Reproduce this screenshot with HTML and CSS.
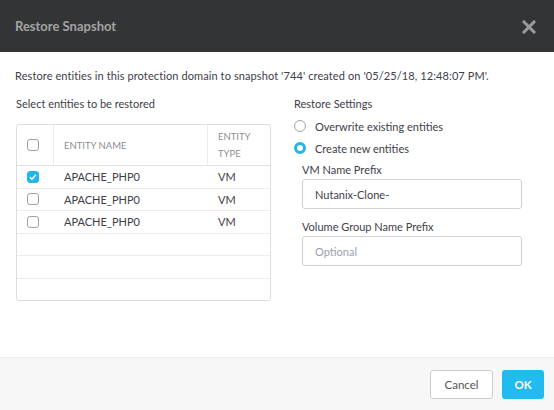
FILE: index.html
```html
<!DOCTYPE html>
<html>
<head>
<meta charset="utf-8">
<link rel="stylesheet" href="styles.css">
</head>
<body>
<div class="dialog">
  <div class="header">
    <div class="title">Restore Snapshot</div>
    <svg class="close" width="14" height="14" viewBox="0 0 14 14"><path d="M2 2 L12 12 M12 2 L2 12" stroke="#9b9b9b" stroke-width="3" stroke-linecap="square"/></svg>
  </div>
  <div class="body">
    <p class="intro">Restore entities in this protection domain to snapshot '744' created on '05/25/18, 12:48:07 PM'.</p>
    <div class="cols">
      <div class="left">
        <div class="label">Select entities to be restored</div>
        <div class="table">
          <div class="row head">
            <div class="c1"><span class="cb"></span></div>
            <div class="c2">ENTITY NAME</div>
            <div class="c3">ENTITY<br>TYPE</div>
          </div>
          <div class="row">
            <div class="c1"><span class="cb on"><svg width="12" height="12" viewBox="0 0 12 12"><path d="M3 6.2 L5 8.2 L9 3.8" fill="none" stroke="#fff" stroke-width="1.6"/></svg></span></div>
            <div class="c2">APACHE_PHP0</div>
            <div class="c3">VM</div>
          </div>
          <div class="row">
            <div class="c1"><span class="cb"></span></div>
            <div class="c2">APACHE_PHP0</div>
            <div class="c3">VM</div>
          </div>
          <div class="row">
            <div class="c1"><span class="cb"></span></div>
            <div class="c2">APACHE_PHP0</div>
            <div class="c3">VM</div>
          </div>
          <div class="row empty"></div>
          <div class="row empty"></div>
          <div class="row empty last"></div>
        </div>
      </div>
      <div class="right">
        <div class="label">Restore Settings</div>
        <div class="radio"><span class="rd"></span>Overwrite existing entities</div>
        <div class="radio"><span class="rd on"></span>Create new entities</div>
        <div class="field">
          <div class="flabel">VM Name Prefix</div>
          <div class="input">Nutanix-Clone-</div>
        </div>
        <div class="field">
          <div class="flabel">Volume Group Name Prefix</div>
          <div class="input ph">Optional</div>
        </div>
      </div>
    </div>
  </div>
  <div class="footer">
    <button class="btn cancel">Cancel</button>
    <button class="btn ok">OK</button>
  </div>
</div>
</body>
</html>
```
FILE: styles.css
```css
* { box-sizing: border-box; }
html, body { margin: 0; padding: 0; background: #fff; }
body { font-family: Lato, "Open Sans", sans-serif; font-size: 11px; color: #3e4048; }
.dialog { width: 554px; height: 410px; display: flex; flex-direction: column; }
.header { height: 52px; background: #333436; display: flex; align-items: center; justify-content: space-between; padding: 0 18px 0 15px; }
.title { color: #a3a3a3; font-weight: 700; font-size: 13px; }
.close { display: block; margin-top: 1px; }
.body { flex: 1; padding: 0 15px; }
.intro { margin: 17px 0 0; line-height: 14px; letter-spacing: 0.1px; }
.cols { display: flex; margin-top: 14px; }
.left { width: 255px; margin-left: 1px; }
.right { margin-left: 23px; flex: 1; }
.label { line-height: 14px; }
.table { margin-top: 13px; border: 1px solid #dcdde0; border-radius: 3px; height: 177px; overflow: hidden; }
.row { display: flex; height: 22.5px; border-bottom: 1px solid #ebecee; align-items: center; }
.row.last { border-bottom: none; }
.row.head { height: 41px; color: #8a8d94; font-size: 9.5px; border-bottom: 1px solid #e0e1e4; align-items: stretch; }
.row.head > div { display: flex; align-items: center; }
.c1 { width: 37px; padding-left: 10px; height: 100%; display: flex; align-items: center; }
.c2 { width: 154px; padding-left: 10px; }
.c3 { flex: 1; padding-left: 10px; }
.row.head .c1, .row.head .c2 { border-right: 1px solid #ebecee; }
.row.head .c3 { line-height: 17px; }
.cb { width: 12px; height: 12px; border: 1px solid #9aa3ad; border-radius: 3px; display: inline-block; }
.cb.on { background: #22b5ec; border-color: #22b5ec; position: relative; }
.cb.on svg { position: absolute; left: -1px; top: -1px; }
.radio { display: flex; align-items: center; margin-top: 8px; height: 14px; }
.radio:first-of-type { margin-top: 8px; }
.rd { width: 12px; height: 12px; border: 1px solid #9aa3ad; border-radius: 50%; margin-right: 9px; }
.rd.on { border: 3.5px solid #22b5ec; background: #fff; }
.field { margin-left: 8px; margin-top: 8px; width: 220px; }
.field + .field { margin-top: 11px; }
.flabel { line-height: 14px; }
.input { margin-top: 2px; height: 30px; border: 1px solid #cfd2d6; border-radius: 3px; padding: 0 12px; display: flex; align-items: center; }
.input.ph { color: #98a2ad; }
.footer { height: 53px; background: #f7f7f7; border-top: 1px solid #ededed; display: flex; justify-content: flex-end; align-items: center; padding: 0 10px 0 0; gap: 9px; }
.btn { font-family: inherit; font-size: 11.5px; height: 29px; border-radius: 3px; cursor: pointer; margin-top: 1px; }
.cancel { width: 63px; background: #fff; border: 1px solid #c9ccd1; color: #555; }
.ok { width: 42px; background: #22bbef; border: none; color: #fff; font-weight: 700; }
```
